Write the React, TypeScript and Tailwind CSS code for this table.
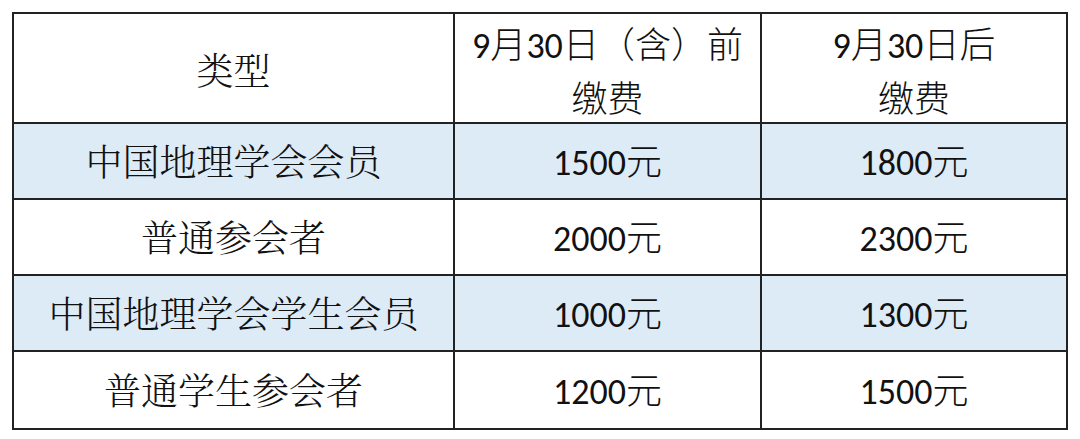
import React from "react";

const serif = { fontFamily: '"SimSun","Noto Serif CJK SC","Noto Sans CJK SC",serif' };

const rows = [
  { name: "中国地理学会会员", a: "1500", b: "1800", blue: true },
  { name: "普通参会者", a: "2000", b: "2300", blue: false },
  { name: "中国地理学会学生会员", a: "1000", b: "1300", blue: true },
  { name: "普通学生参会者", a: "1200", b: "1500", blue: false },
];

function Num({ v }: { v: string }) {
  return (
    <span className="inline-flex items-baseline">
      <span className="font-['Carlito','Lato',sans-serif] text-[36px]">{v}</span>
      <span className="font-['Noto_Sans_CJK_SC',sans-serif] text-[36px] font-light">元</span>
    </span>
  );
}

export default function App() {
  return (
    <div className="w-[1080px] h-[439px] bg-white pl-[12px] pt-[12px]">
      <div className="w-[1056px] border-[2px] border-[#222] text-[#111]">
        <div className="grid grid-cols-[439px_307px_1fr] h-[110px] bg-white border-b-[2px] border-[#222]">
          <div className="flex items-center justify-center pt-[4px] text-[37px] font-light" style={serif}>
            类型
          </div>
          <div className="flex flex-col items-center justify-center pt-[2px] border-l-[2px] border-[#222] leading-[50px] text-[36px] font-['Carlito','Lato','Noto_Sans_CJK_SC',sans-serif]">
            <div>
              9<span className="font-['Noto_Sans_CJK_SC',sans-serif] font-light">月</span>30
              <span className="font-['Noto_Sans_CJK_SC',sans-serif] font-light">日（含）前</span>
            </div>
            <div className="font-['Noto_Sans_CJK_SC',sans-serif] font-light">缴费</div>
          </div>
          <div className="flex flex-col items-center justify-center pt-[2px] border-l-[2px] border-[#222] leading-[50px] text-[36px] font-['Carlito','Lato','Noto_Sans_CJK_SC',sans-serif]">
            <div>
              9<span className="font-['Noto_Sans_CJK_SC',sans-serif] font-light">月</span>30
              <span className="font-['Noto_Sans_CJK_SC',sans-serif] font-light">日后</span>
            </div>
            <div className="font-['Noto_Sans_CJK_SC',sans-serif] font-light">缴费</div>
          </div>
        </div>
        {rows.map((r, i) => (
          <div
            key={i}
            className={`grid grid-cols-[439px_307px_1fr] h-[76px] ${r.blue ? "bg-[#DDEBF7]" : "bg-white"} ${
              i < rows.length - 1 ? "border-b-[2px] border-[#222]" : ""
            }`}
          >
            <div className="flex items-center justify-center text-[37px] font-light" style={serif}>
              {r.name}
            </div>
            <div className="flex items-center justify-center border-l-[2px] border-[#222]">
              <Num v={r.a} />
            </div>
            <div className="flex items-center justify-center border-l-[2px] border-[#222]">
              <Num v={r.b} />
            </div>
          </div>
        ))}
      </div>
    </div>
  );
}
